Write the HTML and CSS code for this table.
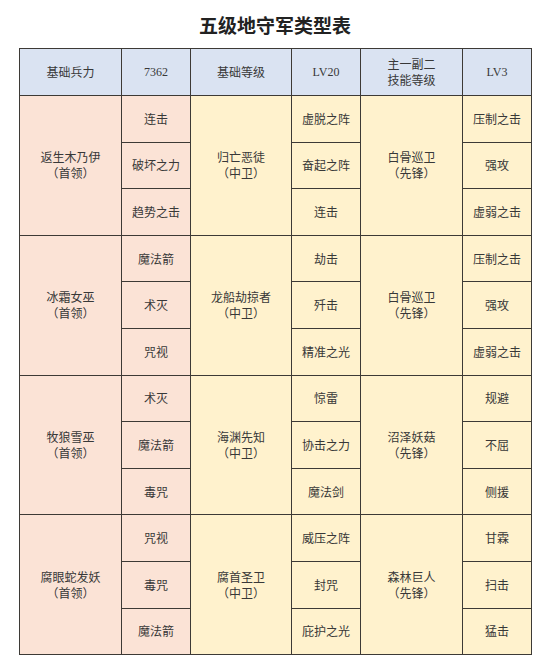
FILE: index.html
```html
<!DOCTYPE html>
<html lang="zh">
<head>
<meta charset="utf-8">
<link rel="stylesheet" href="styles.css">
</head>
<body>
<div class="page">
  <h1 class="title">五级地守军类型表</h1>
  <table class="grid">
    <colgroup>
      <col class="c1"><col class="c2"><col class="c3"><col class="c4"><col class="c5"><col class="c6">
    </colgroup>
    <thead>
      <tr class="head">
        <th>基础兵力</th><th class="latin">7362</th><th>基础等级</th><th class="latin">LV20</th><th>主一副二<br>技能等级</th><th class="latin">LV3</th>
      </tr>
    </thead>
    <tbody>
      <tr><td rowspan="3" class="pk">返生木乃伊<br>（首领）</td><td class="pk">连击</td><td rowspan="3" class="cr">归亡恶徒<br>（中卫）</td><td class="cr">虚脱之阵</td><td rowspan="3" class="cr">白骨巡卫<br>（先锋）</td><td class="cr">压制之击</td></tr>
      <tr><td class="pk">破坏之力</td><td class="cr">奋起之阵</td><td class="cr">强攻</td></tr>
      <tr><td class="pk">趋势之击</td><td class="cr">连击</td><td class="cr">虚弱之击</td></tr>

      <tr><td rowspan="3" class="pk">冰霜女巫<br>（首领）</td><td class="pk">魔法箭</td><td rowspan="3" class="cr">龙船劫掠者<br>（中卫）</td><td class="cr">劫击</td><td rowspan="3" class="cr">白骨巡卫<br>（先锋）</td><td class="cr">压制之击</td></tr>
      <tr><td class="pk">术灭</td><td class="cr">歼击</td><td class="cr">强攻</td></tr>
      <tr><td class="pk">咒视</td><td class="cr">精准之光</td><td class="cr">虚弱之击</td></tr>

      <tr><td rowspan="3" class="pk">牧狼雪巫<br>（首领）</td><td class="pk">术灭</td><td rowspan="3" class="cr">海渊先知<br>（中卫）</td><td class="cr">惊雷</td><td rowspan="3" class="cr">沼泽妖菇<br>（先锋）</td><td class="cr">规避</td></tr>
      <tr><td class="pk">魔法箭</td><td class="cr">协击之力</td><td class="cr">不屈</td></tr>
      <tr><td class="pk">毒咒</td><td class="cr">魔法剑</td><td class="cr">侧援</td></tr>

      <tr><td rowspan="3" class="pk">腐眼蛇发妖<br>（首领）</td><td class="pk">咒视</td><td rowspan="3" class="cr">腐首圣卫<br>（中卫）</td><td class="cr">威压之阵</td><td rowspan="3" class="cr">森林巨人<br>（先锋）</td><td class="cr">甘霖</td></tr>
      <tr><td class="pk">毒咒</td><td class="cr">封咒</td><td class="cr">扫击</td></tr>
      <tr><td class="pk">魔法箭</td><td class="cr">庇护之光</td><td class="cr">猛击</td></tr>
    </tbody>
  </table>
</div>
</body>
</html>
```
FILE: styles.css
```css
html, body {
  margin: 0;
  padding: 0;
  background: #ffffff;
}
.page {
  padding: 12px 0 0 19px;
  width: 512px;
}
.title {
  margin: 0 0 10px 0;
  height: 26px;
  line-height: 26px;
  text-align: center;
  font-family: "Noto Sans CJK SC", sans-serif;
  font-weight: 700;
  font-size: 19px;
  color: #222;
}
.grid {
  border-collapse: collapse;
  table-layout: fixed;
  width: 512px;
  font-family: "Noto Sans CJK SC", sans-serif;
  font-size: 12px;
  color: #383838;
}
.c1 { width: 102px; }
.c2 { width: 69px; }
.c3 { width: 101px; }
.c4 { width: 69px; }
.c5 { width: 102px; }
.c6 { width: 69px; }
.grid th, .grid td {
  border: 1.5px solid #3d3a36;
  text-align: center;
  vertical-align: middle;
  padding: 0;
  line-height: 16px;
  font-weight: 400;
}
.head th {
  height: 46px;
  background: #dae3f2;
}
.head th.latin {
  font-family: "Liberation Serif", serif;
  font-size: 12px;
}
.grid tbody tr {
  height: 46.6px;
}
.pk { background: #fbe3d6; }
.cr { background: #fff2cd; }
```
